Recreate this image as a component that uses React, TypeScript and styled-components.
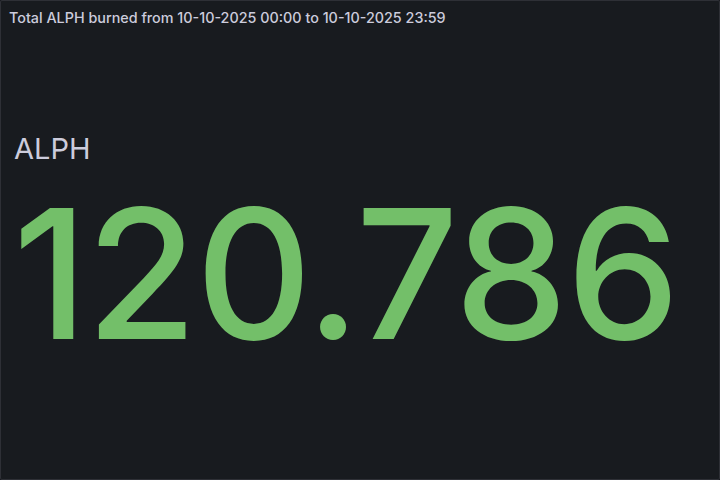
import styled, { createGlobalStyle } from 'styled-components';

const GlobalStyle = createGlobalStyle`
	html, body {
		margin: 0;
		padding: 0;
		background: #111217;
	}
	body {
		font-family: Inter, 'Noto Sans', sans-serif;
	}
`;

const Panel = styled.div`
	box-sizing: border-box;
	width: 720px;
	height: 480px;
	background-color: #181b1f;
	border: 1px solid rgba(204, 204, 220, 0.12);
	border-radius: 2px;
	display: flex;
	flex-direction: column;
`;

const Header = styled.div`
	height: 32px;
	display: flex;
	align-items: center;
	padding: 0 8px;
`;

const Title = styled.h2`
	margin: 0;
	font-size: 14.35px;
	font-weight: 500;
	color: #ccccdc;
	white-space: nowrap;
`;

const Body = styled.div`
	flex: 1;
	display: flex;
	flex-direction: column;
	padding: 101px 12px 0;
`;

const Label = styled.div`
	font-size: 29px;
	font-weight: 400;
	color: #ccccdc;
	line-height: 1;
	margin-bottom: 21px;
	padding-left: 1px;
`;

const Value = styled.div<{ $color: string }>`
	font-size: 180px;
	font-weight: 500;
	line-height: 1;
	color: ${(p) => p.$color};
	letter-spacing: -1.4px;
`;

const App = () => {
	return (
		<>
			<GlobalStyle />
			<Panel>
				<Header>
					<Title>Total ALPH burned from 10-10-2025 00:00 to 10-10-2025 23:59</Title>
				</Header>
				<Body>
					<Label>ALPH</Label>
					<Value $color="#73bf69">120.786</Value>
				</Body>
			</Panel>
		</>
	);
};

export default App;
